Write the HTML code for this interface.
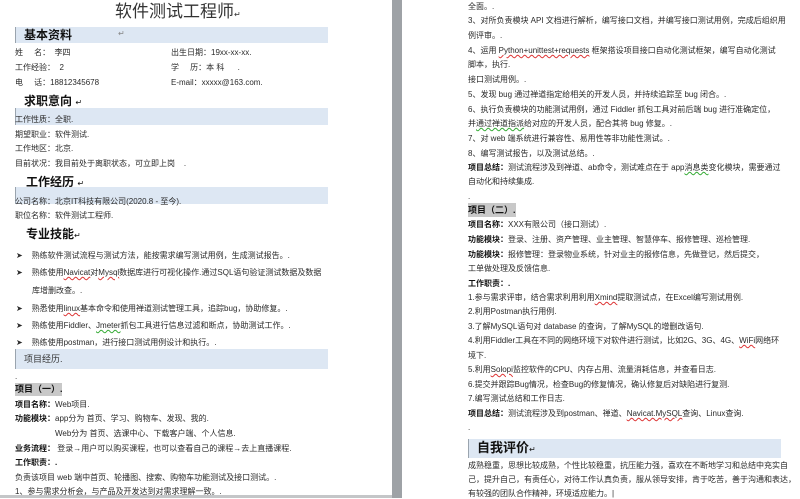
<!DOCTYPE html>
<html><head><meta charset="utf-8"><style>
*{margin:0;padding:0}
body{width:800px;height:498px;background:#fff;position:relative;overflow:hidden;font-family:"Liberation Sans","Noto Sans CJK SC",sans-serif;color:#2a2a2a}
.t{position:absolute;font-size:8px;line-height:10px;white-space:nowrap;letter-spacing:0}
.h{position:absolute;font-size:12px;line-height:14px;font-weight:bold;white-space:nowrap;color:#111;font-family:"Liberation Sans","Noto Sans CJK SC",sans-serif}
.band{position:absolute;background:#dde7f3;border-left:1px solid #9aa4ae}
.b{font-weight:bold;color:#111}
.hl{position:absolute;background:#c8c8c8}
.u{text-decoration:underline wavy #d33;text-decoration-thickness:1px}
.g{text-decoration:underline wavy #3a3;text-decoration-thickness:1px}
</style></head><body>
<div style="position:absolute;left:392px;top:0;width:10px;height:498px;background:#9ea2a6"></div>
<div style="position:absolute;left:0;top:495px;width:392px;height:3px;background:#c4c6c8"></div>
<div style="position:absolute;left:115px;top:2px;font-size:17px;line-height:20px;white-space:nowrap;color:#333">软件测试工程师<span style="font-size:8px">↵</span></div>

<div class="band" style="left:15px;top:27px;width:312px;height:16px"></div>
<div class="h" style="left:24px;top:28px">基本资料</div>
<div class="t" style="left:118px;top:29px;color:#888">↵</div>
<div class="t" style="left:15px;top:48px">姓&nbsp;&nbsp;&nbsp;&nbsp;&nbsp;名：&nbsp;&nbsp;李四</div>
<div class="t" style="left:171px;top:48px">出生日期：19xx-xx-xx.</div>
<div class="t" style="left:15px;top:63px">工作经验：&nbsp;&nbsp;2</div>
<div class="t" style="left:171px;top:63px">学&nbsp;&nbsp;&nbsp;&nbsp;&nbsp;历：本 科&nbsp;&nbsp;&nbsp;&nbsp;&nbsp;&nbsp;.</div>
<div class="t" style="left:15px;top:78px">电&nbsp;&nbsp;&nbsp;&nbsp;&nbsp;话：18812345678</div>
<div class="t" style="left:171px;top:78px">E-mail：xxxxx@163.com.</div>

<div class="h" style="left:24px;top:94px">求职意向 <span style="font-size:8px;font-weight:normal">↵</span></div>
<div class="band" style="left:15px;top:108px;width:312px;height:17px"></div>
<div class="t" style="left:15px;top:115px">工作性质：全职.</div>
<div class="t" style="left:15px;top:130px">期望职业：软件测试.</div>
<div class="t" style="left:15px;top:144px">工作地区：北京.</div>
<div class="t" style="left:15px;top:159px">目前状况：我目前处于离职状态，可立即上岗&nbsp;&nbsp;&nbsp;&nbsp;.</div>

<div class="h" style="left:26px;top:175px">工作经历 <span style="font-size:8px;font-weight:normal">↵</span></div>
<div class="band" style="left:15px;top:187px;width:312px;height:17px"></div>
<div class="t" style="left:15px;top:197px">公司名称：北京IT科技有限公司(2020.8 - 至今).</div>
<div class="t" style="left:15px;top:211px">职位名称：软件测试工程师.</div>

<div class="h" style="left:26px;top:227px">专业技能<span style="font-size:8px;font-weight:normal">↵</span></div>
<div class="t" style="left:16px;top:251px">➤&nbsp;&nbsp;&nbsp;&nbsp;熟练软件测试流程与测试方法，能按需求编写测试用例，生成测试报告。.</div>
<div class="t" style="left:16px;top:268px">➤&nbsp;&nbsp;&nbsp;&nbsp;熟练使用<span class="u">Navicat</span>对<span class="u">Mysql</span>数据库进行可视化操作.通过SQL语句验证测试数据及数据</div>
<div class="t" style="left:32px;top:286px">库增删改查。.</div>
<div class="t" style="left:16px;top:304px">➤&nbsp;&nbsp;&nbsp;&nbsp;熟悉使用<span class="u">linux</span>基本命令和使用禅道测试管理工具，追踪bug，协助修复。.</div>
<div class="t" style="left:16px;top:321px">➤&nbsp;&nbsp;&nbsp;&nbsp;熟练使用Fiddler、<span class="g">Jmeter</span>抓包工具进行信息过滤和断点，协助测试工作。.</div>
<div class="t" style="left:16px;top:338px">➤&nbsp;&nbsp;&nbsp;&nbsp;熟练使用postman，进行接口测试用例设计和执行。.</div>
<div class="band" style="left:15px;top:349px;width:312px;height:20px"></div>
<div class="t" style="left:24px;top:354px;font-size:9px;color:#333">项目经历.</div>
<div class="t" style="left:15px;top:372px">.</div>
<div class="hl" style="left:15px;top:383px;width:47px;height:13px"></div>
<div class="t b" style="left:15px;top:384px;font-size:9px">项目（一）.</div>
<div class="t" style="left:15px;top:400px"><span class="b">项目名称：</span>Web项目.</div>
<div class="t" style="left:15px;top:414px"><span class="b">功能模块：</span>app分为 首页、学习、购物车、发现、我的.</div>
<div class="t" style="left:55px;top:429px">Web分为 首页、选课中心、下载客户端、个人信息.</div>
<div class="t" style="left:15px;top:444px"><span class="b">业务流程：</span> 登录→用户可以购买课程，也可以查看自己的课程→去上直播课程.</div>
<div class="t b" style="left:15px;top:458px">工作职责：.</div>
<div class="t" style="left:15px;top:473px">负责该项目 web 端中首页、轮播图、搜索、购物车功能测试及接口测试。.</div>
<div class="t" style="left:15px;top:487px">1、参与需求分析会，与产品及开发达到对需求理解一致。.</div>

<div class="t" style="left:468px;top:2px">全面。.</div>
<div class="t" style="left:468px;top:16px">3、对所负责模块 API 文档进行解析，编写接口文档，并编写接口测试用例，完成后组织用</div>
<div class="t" style="left:468px;top:31px">例评审。.</div>
<div class="t" style="left:468px;top:46px">4、运用 <span class="u">Python+unittest+requests</span> 框架搭设项目接口自动化测试框架，编写自动化测试</div>
<div class="t" style="left:468px;top:60px">脚本，执行.</div>
<div class="t" style="left:468px;top:75px">接口测试用例。.</div>
<div class="t" style="left:468px;top:90px">5、发现 bug 通过禅道指定给相关的开发人员，并持续追踪至 bug 闭合。.</div>
<div class="t" style="left:468px;top:105px">6、执行负责模块的功能测试用例，通过 Fiddler 抓包工具对前后端 bug 进行准确定位，</div>
<div class="t" style="left:468px;top:119px">并<span class="g">通过禅道指派</span>给对应的开发人员，配合其将 bug 修复。.</div>
<div class="t" style="left:468px;top:134px">7、对 web 端系统进行兼容性、易用性等非功能性测试。.</div>
<div class="t" style="left:468px;top:149px">8、编写测试报告，以及测试总结。.</div>
<div class="t" style="left:468px;top:163px"><span class="b">项目总结：</span>测试流程涉及到禅道、ab命令，测试难点在于 app<span class="g">消息类</span>变化模块，需要通过</div>
<div class="t" style="left:468px;top:177px">自动化和持续集成.</div>
<div class="t" style="left:468px;top:192px">.</div>
<div class="hl" style="left:468px;top:203px;width:48px;height:14px"></div>
<div class="t b" style="left:468px;top:205px;font-size:9px">项目（二）.</div>
<div class="t" style="left:468px;top:220px"><span class="b">项目名称：</span>XXX有限公司（接口测试）.</div>
<div class="t" style="left:468px;top:235px"><span class="b">功能模块：</span>登录、注册、资产管理、业主管理、智慧停车、报修管理、巡检管理.</div>
<div class="t" style="left:468px;top:250px"><span class="b">功能模块：</span>报修管理：登录物业系统，针对业主的报修信息，先做登记，然后提交，</div>
<div class="t" style="left:468px;top:264px">工单做处理及反馈信息.</div>
<div class="t b" style="left:468px;top:279px">工作职责：.</div>
<div class="t" style="left:468px;top:293px">1.参与需求评审，结合需求利用利用<span class="u">Xmind</span>提取测试点，在Excel编写测试用例.</div>
<div class="t" style="left:468px;top:307px">2.利用Postman执行用例.</div>
<div class="t" style="left:468px;top:322px">3.了解MySQL语句对 database 的查询，了解MySQL的增删改语句.</div>
<div class="t" style="left:468px;top:336px">4.利用Fiddler工具在不同的网络环境下对软件进行测试，比如2G、3G、4G、<span class="u">WiFi</span>网络环</div>
<div class="t" style="left:468px;top:351px">境下.</div>
<div class="t" style="left:468px;top:365px">5.利用<span class="u">Solopi</span>监控软件的CPU、内存占用、流量消耗信息，并查看日志.</div>
<div class="t" style="left:468px;top:380px">6.提交并跟踪Bug情况，检查Bug的修复情况，确认修复后对缺陷进行复测.</div>
<div class="t" style="left:468px;top:394px">7.编写测试总结和工作日志.</div>
<div class="t" style="left:468px;top:409px"><span class="b">项目总结：</span>测试流程涉及到postman、禅道、<span class="u">Navicat.MySQL</span>查询、Linux查询.</div>
<div class="t" style="left:468px;top:423px">.</div>
<div class="band" style="left:468px;top:439px;width:312px;height:19px"></div>
<div class="h" style="left:477px;top:440px;font-size:13px;line-height:16px">自我评价<span style="font-size:8px;font-weight:normal">↵</span></div>
<div class="t" style="left:468px;top:461px">成熟稳重，思想比较成熟，个性比较稳重，抗压能力强，喜欢在不断地学习和总结中充实自</div>
<div class="t" style="left:468px;top:475px">己，提升自己，有责任心，对待工作认真负责，服从领导安排，肯于吃苦，善于沟通和表达，</div>
<div class="t" style="left:468px;top:489px">有较强的团队合作精神，环境适应能力。|</div>
</body></html>
